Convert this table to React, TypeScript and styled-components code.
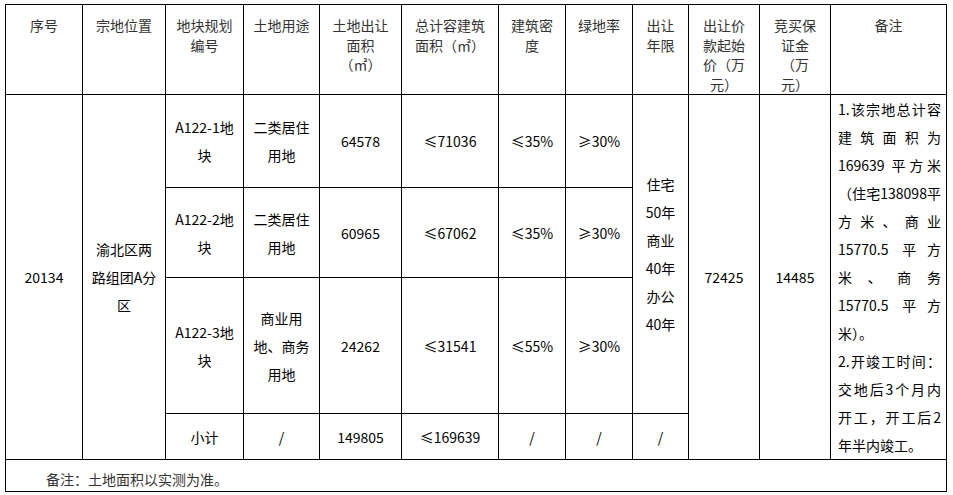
import React from 'react';
import styled, { createGlobalStyle } from 'styled-components';

const GlobalStyle = createGlobalStyle`
  html, body {
    margin: 0;
    padding: 0;
    background: #fff;
  }
  body {
    font-family: "Noto Sans CJK SC", "Noto Sans", sans-serif;
  }
`;

const Page = styled.div`
  padding: 4px 0 0 5px;
`;

const Table = styled.table`
  border-collapse: collapse;
  table-layout: fixed;
  width: 941px;
  font-size: 14px;
  color: #000;
`;

const Row = styled.tr<{ $h: number }>`
  height: ${(p) => p.$h}px;
`;

const HeadCell = styled.th`
  border: 1px solid #000;
  font-weight: normal;
  color: #333;
  vertical-align: top;
  text-align: center;
  line-height: 19.5px;
  padding: 11px 2px 0;
`;

const Cell = styled.td`
  border: 1px solid #000;
  vertical-align: middle;
  text-align: center;
  line-height: 28px;
  padding: 0 2px;
`;

const NoteCell = styled.td`
  border: 1px solid #000;
  vertical-align: middle;
  padding: 0 5px 0 7px;
  line-height: 28px;
`;

const NoteLine = styled.div<{ $justify?: boolean }>`
  white-space: nowrap;
  text-align: ${(p) => (p.$justify ? 'justify' : 'left')};
  text-align-last: ${(p) => (p.$justify ? 'justify' : 'left')};
  text-justify: inter-character;
`;

const FootCell = styled.td`
  border: 1px solid #000;
  color: #333;
  text-align: left;
  vertical-align: middle;
  padding: 6px 0 0 40px;
  line-height: 20px;
`;

const widths = [77, 83, 78, 76, 82, 97, 67, 67, 56, 71, 71, 116];

const headers: string[][] = [
  ['序号'],
  ['宗地位置'],
  ['地块规划', '编号'],
  ['土地用途'],
  ['土地出让', '面积', '（㎡）'],
  ['总计容建筑', '面积（㎡）'],
  ['建筑密', '度'],
  ['绿地率'],
  ['出让', '年限'],
  ['出让价', '款起始', '价（万', '元）'],
  ['竞买保', '证金', '（万', '元）'],
  ['备注'],
];

const noteLines: [string, boolean][] = [
  ['1.该宗地总计容', true],
  ['建筑面积为', true],
  ['169639 平方米', true],
  ['（住宅138098平', true],
  ['方米、商业', true],
  ['15770.5 平方', true],
  ['米、商务', true],
  ['15770.5 平方', true],
  ['米）。', false],
  ['2.开竣工时间：', true],
  ['交地后3个月内', true],
  ['开工，开工后2', true],
  ['年半内竣工。', false],
];

const lines = (parts: string[]) =>
  parts.map((t, i) => (
    <React.Fragment key={i}>
      {i > 0 && <br />}
      {t}
    </React.Fragment>
  ));

const plots = [
  { code: ['A122-1地', '块'], use: ['二类居住', '用地'], area: '64578', gfa: '≤71036', density: '≤35%', green: '≥30%', h: 93 },
  { code: ['A122-2地', '块'], use: ['二类居住', '用地'], area: '60965', gfa: '≤67062', density: '≤35%', green: '≥30%', h: 90 },
  { code: ['A122-3地', '块'], use: ['商业用', '地、商务', '用地'], area: '24262', gfa: '≤31541', density: '≤55%', green: '≥30%', h: 136 },
];

export default function App() {
  return (
    <Page>
      <GlobalStyle />
      <Table>
        <colgroup>
          {widths.map((w, i) => (
            <col key={i} style={{ width: w }} />
          ))}
        </colgroup>
        <tbody>
          <Row $h={90}>
            {headers.map((h, i) => (
              <HeadCell key={i}>{lines(h)}</HeadCell>
            ))}
          </Row>
          {plots.map((p, i) => (
            <Row $h={p.h} key={p.area}>
              {i === 0 && (
                <>
                  <Cell rowSpan={4}>20134</Cell>
                  <Cell rowSpan={4}>{lines(['渝北区两', '路组团A分', '区'])}</Cell>
                </>
              )}
              <Cell>{lines(p.code)}</Cell>
              <Cell>{lines(p.use)}</Cell>
              <Cell>{p.area}</Cell>
              <Cell>{p.gfa}</Cell>
              <Cell>{p.density}</Cell>
              <Cell>{p.green}</Cell>
              {i === 0 && (
                <>
                  <Cell rowSpan={3}>{lines(['住宅', '50年', '商业', '40年', '办公', '40年'])}</Cell>
                  <Cell rowSpan={4}>72425</Cell>
                  <Cell rowSpan={4}>14485</Cell>
                  <NoteCell rowSpan={4}>
                    {noteLines.map(([t, j], k) => (
                      <NoteLine key={k} $justify={j}>
                        {t}
                      </NoteLine>
                    ))}
                  </NoteCell>
                </>
              )}
            </Row>
          ))}
          <Row $h={46}>
            <Cell>小计</Cell>
            <Cell>/</Cell>
            <Cell>149805</Cell>
            <Cell>≤169639</Cell>
            <Cell>/</Cell>
            <Cell>/</Cell>
            <Cell>/</Cell>
          </Row>
          <Row $h={32}>
            <FootCell colSpan={12}>备注：土地面积以实测为准。</FootCell>
          </Row>
        </tbody>
      </Table>
    </Page>
  );
}
